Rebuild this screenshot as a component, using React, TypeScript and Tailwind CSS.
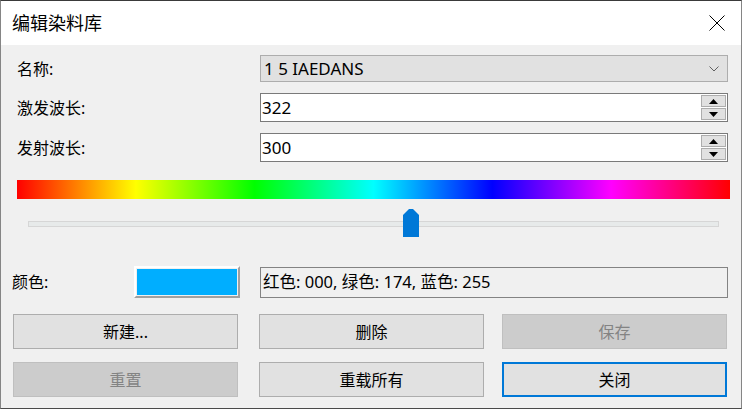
import React from "react";

const FONT = { fontFamily: '"Noto Sans", "Noto Sans CJK SC", sans-serif' };

function Spinner() {
  return (
    <div className="flex flex-col gap-[1px] mr-[1px]">
      <div className="w-[25px] h-[12px] bg-[#e1e1e1] border border-[#adadad] flex items-center justify-center">
        <svg width="9" height="5" viewBox="0 0 9 5"><polygon points="0,5 9,5 4.5,0" fill="#000" /></svg>
      </div>
      <div className="w-[25px] h-[12px] bg-[#e1e1e1] border border-[#adadad] flex items-center justify-center">
        <svg width="9" height="5" viewBox="0 0 9 5"><polygon points="0,0 9,0 4.5,5" fill="#000" /></svg>
      </div>
    </div>
  );
}

function NumRow({ label, value }: { label: string; value: string }) {
  return (
    <div className="flex items-center mt-[11px] h-[29px]">
      <div className="w-[259px] pl-[16px] text-[16px] text-black">{label}</div>
      <div className="w-[468px] h-[29px] border border-[#7a7a7a] bg-white flex items-center justify-between">
        <span className="pl-[1px] text-[17px] text-black leading-none">{value}</span>
        <Spinner />
      </div>
    </div>
  );
}

function Btn({ children, kind = "normal", className = "" }: { children: React.ReactNode; kind?: "normal" | "disabled" | "focus"; className?: string }) {
  const base = "w-[225px] h-[35px] flex items-center justify-center text-[16px] box-border";
  const k =
    kind === "disabled"
      ? "bg-[#cccccc] border border-[#bfbfbf] text-[#838383]"
      : kind === "focus"
      ? "bg-[#e1e1e1] border-2 border-[#0078d7] text-black"
      : "bg-[#e1e1e1] border border-[#adadad] text-black";
  return <div className={`${base} ${k} ${className}`}>{children}</div>;
}

export default function App() {
  return (
    <div style={FONT} className="w-[742px] h-[409px] box-border border-x border-x-[#858585] border-t border-t-[#3a3a3a] border-b border-b-[#4a4a4a] flex flex-col overflow-hidden">
      <div className="h-[44px] bg-white flex items-center justify-between">
        <span className="pl-[11px] text-[18px] text-black">编辑染料库</span>
        <svg className="mr-[16px]" width="16" height="16" viewBox="0 0 16 16">
          <path d="M0.5 0.5 L15.5 15.5 M15.5 0.5 L0.5 15.5" stroke="#000" strokeWidth="1" fill="none" />
        </svg>
      </div>
      <div className="flex-1 bg-[#f0f0f0] flex flex-col">
        <div className="flex items-center mt-[10px] h-[27px]">
          <div className="w-[259px] pl-[16px] text-[16px] text-black">名称:</div>
          <div className="w-[468px] h-[27px] border border-[#adadad] bg-[#e1e1e1] flex items-center justify-between">
            <span className="pl-[3px] text-[17px] text-black">1 5 IAEDANS</span>
            <svg className="mr-[8px]" width="10" height="6" viewBox="0 0 10 6">
              <polyline points="0.5,0.5 5,5 9.5,0.5" stroke="#606060" strokeWidth="1" fill="none" />
            </svg>
          </div>
        </div>
        <NumRow label="激发波长:" value="322" />
        <NumRow label="发射波长:" value="300" />
        <div className="ml-[16px] mt-[18px] w-[713px] h-[19px] bg-[linear-gradient(to_right,#ff0000,#ffff00,#00ff00,#00ffff,#0000ff,#ff00ff,#ff0000)]" />
        <div className="ml-[27px] w-[691px] h-[40px] relative">
          <div className="mt-[22px] h-[6px] bg-[#e7eaea] border border-[#d6d6d6]" />
          <svg className="absolute left-[375px] top-[10px]" width="16" height="28" viewBox="0 0 16 28">
            <polygon points="0,6 6,0 10,0 16,6 16,28 0,28" fill="#0078d7" />
          </svg>
        </div>
        <div className="flex items-center mt-[27px] h-[32px]">
          <div className="w-[133px] pl-[11px] text-[16px] text-black">颜色:</div>
          <div className="w-[106px] h-[32px] border-t-2 border-l-2 border-t-white border-l-white border-b-2 border-r-2 border-b-[#a0a0a0] border-r-[#a0a0a0] p-[1px] box-border">
            <div className="w-full h-full bg-[#00aeff]" />
          </div>
          <div className="ml-[20px] w-[468px] h-[31px] border border-[#838383] bg-[#f0f0f0] flex items-center">
            <span className="pl-[2px] text-[16.5px] text-black">红色: 000, 绿色: 174, 蓝色: 255</span>
          </div>
        </div>
        <div className="flex mt-[16px] ml-[12px]">
          <Btn>新建...</Btn>
          <Btn className="ml-[21px]">删除</Btn>
          <Btn kind="disabled" className="ml-[18px]">保存</Btn>
        </div>
        <div className="flex mt-[13px] ml-[12px]">
          <Btn kind="disabled">重置</Btn>
          <Btn className="ml-[21px]">重载所有</Btn>
          <Btn kind="focus" className="ml-[18px]">关闭</Btn>
        </div>
      </div>
    </div>
  );
}
